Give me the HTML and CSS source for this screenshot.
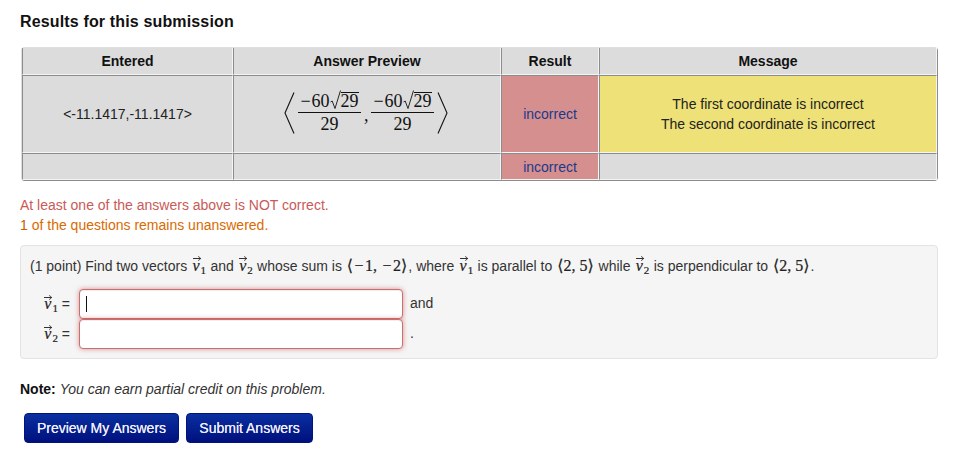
FILE: index.html
```html
<!DOCTYPE html>
<html lang="en">
<head>
<meta charset="utf-8">
<title>Results for this submission</title>
<link rel="stylesheet" href="styles.css">
</head>
<body>
<h3 class="title">Results for this submission</h3>
<div class="results-wrap">
<table class="results">
  <colgroup><col class="c1"><col class="c2"><col class="c3"><col class="c4"></colgroup>
  <tr class="head"><th>Entered</th><th>Answer Preview</th><th>Result</th><th>Message</th></tr>
  <tr class="main">
    <td>&lt;-11.1417,-11.1417&gt;</td>
    <td>
      <span class="math preview">
        <svg class="bracket" width="11" height="42" viewBox="0 0 11 42"><path d="M10 0.5 L1 21 L10 41.5" fill="none" stroke="#111" stroke-width="1.1"/></svg>
        <span class="frac"><span class="num"><span class="minus">&minus;</span>60<span class="sqrt"><svg class="radical" width="11" height="20" viewBox="0 0 11 20"><path d="M0.5 12 L2.2 11 L5 18.5 L10.5 0.5" fill="none" stroke="#111" stroke-width="0.9"/></svg><span class="radicand">29</span></span></span><span class="den">29</span></span>
        <span class="comma">,</span>
        <span class="frac"><span class="num"><span class="minus">&minus;</span>60<span class="sqrt"><svg class="radical" width="11" height="20" viewBox="0 0 11 20"><path d="M0.5 12 L2.2 11 L5 18.5 L10.5 0.5" fill="none" stroke="#111" stroke-width="0.9"/></svg><span class="radicand">29</span></span></span><span class="den">29</span></span>
        <svg class="bracket" width="11" height="42" viewBox="0 0 11 42"><path d="M1 0.5 L10 21 L1 41.5" fill="none" stroke="#111" stroke-width="1.1"/></svg>
      </span>
    </td>
    <td class="bad">incorrect</td>
    <td class="msg">The first coordinate is incorrect<br>The second coordinate is incorrect</td>
  </tr>
  <tr class="last"><td></td><td></td><td class="bad">incorrect</td><td></td></tr>
</table>
</div>
<div class="status">
  <div class="err">At least one of the answers above is NOT correct.</div>
  <div class="warn"><b class="warn-n">1</b> of the questions remains unanswered.</div>
</div>
<div class="problem">
  <p class="stmt">(1 point) Find two vectors <span class="math"><span class="vec">v</span><sub>1</sub></span> and <span class="math"><span class="vec">v</span><sub>2</sub></span> whose sum is <span class="math ang">&#10216;<span class="minus-s">&minus;</span>1, <span class="minus-s">&minus;</span>2&#10217;</span>, where <span class="math"><span class="vec">v</span><sub>1</sub></span> is parallel to <span class="math ang">&#10216;2, 5&#10217;</span> while <span class="math"><span class="vec">v</span><sub>2</sub></span> is perpendicular to <span class="math ang">&#10216;2, 5&#10217;</span>.</p>
  <div class="answers">
    <span class="lbl"><span class="math"><span class="vec">v</span><sub>1</sub></span> =</span>
    <div class="field"><span class="caret"></span></div>
    <span class="after">and</span>
    <span class="lbl"><span class="math"><span class="vec">v</span><sub>2</sub></span> =</span>
    <div class="field"></div>
    <span class="after">.</span>
  </div>
</div>
<p class="note"><b>Note:</b> <i>You can earn partial credit on this problem.</i></p>
<div class="buttons">
  <button class="btn b1" type="button">Preview My Answers</button>
  <button class="btn b2" type="button">Submit Answers</button>
</div>
</body>
</html>
```
FILE: styles.css
```css
* { box-sizing: border-box; }
html, body { margin: 0; padding: 0; background: #fff; }
body {
  width: 962px;
  height: 450px;
  overflow: hidden;
  padding: 0 24px 0 20px;
  font-family: "Liberation Sans", Arial, sans-serif;
  font-size: 14px;
  line-height: 20px;
  color: #333;
}
.title {
  margin: 0;
  padding-top: 12px;
  height: 47px;
  font-size: 16px;
  line-height: 20px;
  font-weight: bold;
  letter-spacing: .15px;
  color: #111;
}
.results-wrap { padding-left: 1px; }
.results {
  width: 917px;
  height: 134px;
  table-layout: fixed;
  border-collapse: separate;
  border-spacing: 0;
  border: 1px solid;
  border-color: #dedede #8c8c8c #8c8c8c #dedede;
  border-radius: 4px;
  background: #dcdcdc;
  color: #222;
}
.c1 { width: 211px; }
.c2 { width: 268px; }
.c3 { width: 98px; }
.results th, .results td {
  padding: 0;
  text-align: center;
  vertical-align: middle;
  border-left: 1px solid #8c8c8c;
  border-top: 1px solid #8c8c8c;
  border-right: 1px solid #f4f4f4;
  border-bottom: 1px solid #f4f4f4;
}
.results th { background: #dcdcdc; font-weight: bold; color: #111; border-top: 0; }
.head { height: 27px; }
.main { height: 78px; }
.last { height: 27px; }
.results td.bad { background: #d58f8f; color: #1a3a8a; }
.results td.msg { background: #eee177; color: #222; }

.math { font-family: "Liberation Serif", "DejaVu Serif", serif; color: #222; white-space: nowrap; }
.preview { display: inline-flex; align-items: center; justify-content: center; margin: 2px 2px 0 0; font-size: 18px; line-height: 20px; font-weight: normal; color: #111; }
.frac { display: inline-flex; flex-direction: column; align-items: stretch; width: 63px; margin: 0 2px; }
.num { display: flex; align-items: flex-end; justify-content: center; height: 21px; border-bottom: 1px solid #111; padding-bottom: 2px; line-height: 17px; }
.minus { margin-right: 1px; }
.den { display: block; height: 21px; line-height: 23px; text-align: center; }
.sqrt { display: inline-flex; align-items: flex-end; }
.radical { display: block; }
.radicand { border-top: 1px solid #111; line-height: 17px; height: 18px; }
.comma { align-self: center; margin: 4px 1px 0; width: 4px; }
.bracket { display: block; flex: none; margin: 0 1px; }

.status { padding-top: 14px; height: 64px; }
.err { color: #c95a58; }
.warn { color: #d96a00; }
.warn-n { font-weight: normal; color: #c66000; }

.problem {
  width: 918px;
  height: 114px;
  padding: 9px 9px 0;
  background: #f5f5f5;
  border: 1px solid #e3e3e3;
  border-radius: 4px;
}
.stmt { margin: 0; height: 34px; line-height: 21px; font-size: 14px; white-space: nowrap; color: #333; }
.stmt .math { font-size: 16px; margin: 0 .5px; -webkit-text-stroke: .2px #222; }
.stmt .ang { margin: 0 1px; }
.minus-s { margin: 0 1.5px; }
.vec {
  display: inline-block;
  font-style: italic;
  position: relative;
  width: 9px;
  text-align: center;
}
.vec::before {
  content: "";
  position: absolute;
  left: 1px;
  right: 0;
  top: 3px;
  height: 1px;
  background: #333;
}
.vec::after {
  content: "";
  position: absolute;
  right: 0;
  top: 1px;
  width: 4px;
  height: 4px;
  border-top: 1px solid #333;
  border-right: 1px solid #333;
  transform: rotate(45deg) scale(.7);
}
.math sub { font-size: 11px; line-height: 0; vertical-align: -3px; font-style: normal; }
.answers {
  display: grid;
  grid-template-columns: 49px 324px auto;
  grid-template-rows: 30px 30px;
  align-items: center;
}
.lbl { justify-self: end; margin-right: 9px; white-space: nowrap; font-size: 14px; }
.lbl .math { font-size: 16px; -webkit-text-stroke: .2px #222; }
.field {
  height: 30px;
  background: #fff;
  border: 1px solid #c96f6f;
  border-radius: 4px;
  box-shadow: inset 0 1px 1px rgba(0,0,0,.075), 0 0 5px rgba(200,80,80,.6);
  padding: 5px 6px;
  display: flex;
  align-items: center;
}
.caret { width: 1px; height: 16px; background: #111; }
.after { padding: 0 0 2px 7px; color: #333; }

.note { margin: 0; padding-top: 20px; height: 54px; color: #333; font-size: 14px; line-height: 20px; }
.note b { color: #111; }
.buttons { display: flex; gap: 7px; padding-left: 4px; }
.btn {
  height: 30px;
  padding: 0;
  font-family: "Liberation Sans", Arial, sans-serif;
  font-size: 14px;
  color: #f0f0f8;
  border: 1px solid #00147a;
  border-radius: 4px;
  background: linear-gradient(#0a2fa0, #00107e);
  text-shadow: 0 0 .5px #e8e8f4;
}
.b1 { width: 155px; }
.b2 { width: 127px; }
```
